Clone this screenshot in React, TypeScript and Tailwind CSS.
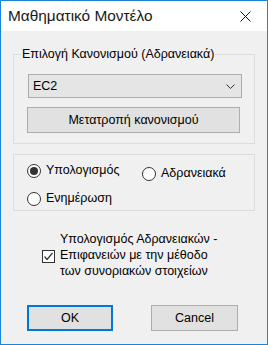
import React from "react";

function Radio({ checked, label }: { checked?: boolean; label: string }) {
  return (
    <div className="flex items-center gap-[5px] h-[15px]">
      <div className="w-[14px] h-[14px] rounded-full border border-[#333333] bg-white flex items-center justify-center shrink-0">
        {checked && <div className="w-[8px] h-[8px] rounded-full bg-[#333333]" />}
      </div>
      <span className="leading-[15px]">{label}</span>
    </div>
  );
}

export default function App() {
  return (
    <div
      className="w-[268px] h-[345px] border border-[#1883d7] bg-[#f0f0f0] flex flex-col text-[12.5px] text-black"
      style={{ fontFamily: '"Liberation Sans", Arial, sans-serif' }}
    >
      <div className="h-[30px] bg-white flex items-center justify-between pl-[7px] pr-[16px]">
        <span className="text-[15.4px] leading-[20px] text-[#1a1a1a]">Μαθηματικό Μοντέλο</span>
        <svg width="11" height="11" viewBox="0 0 11 11" className="mt-[1px]">
          <path d="M0.5 0.5 L10.5 10.5 M10.5 0.5 L0.5 10.5" stroke="#111" strokeWidth="1" />
        </svg>
      </div>

      <div className="flex flex-col px-[12px]">
        <div className="relative mt-[23px] border border-[#dcdcdc] h-[90px] pl-[13px] pt-[19px]">
          <span className="absolute left-[7px] -top-[9px] px-[1px] bg-[#f0f0f0] leading-[16px]">
            Επιλογή Κανονισμού (Αδρανειακά)
          </span>
          <div className="w-[214px] h-[24px] ml-[1px] border border-[#acacac] bg-[#e5e5e5] flex items-center justify-between pl-[4px] pr-[6px]">
            <span>EC2</span>
            <svg width="9" height="5" viewBox="0 0 9 5">
              <path d="M0.5 0.5 L4.5 4.5 L8.5 0.5" stroke="#333" strokeWidth="1" fill="none" />
            </svg>
          </div>
          <div className="mt-[9px] w-[213px] h-[26px] border border-[#adadad] bg-[#e1e1e1] flex items-center justify-center">
            Μετατροπή κανονισμού
          </div>
        </div>

        <div className="mt-[10px] border border-[#dcdcdc] h-[57px] pl-[13px] pt-[8px] flex flex-col gap-[13px]">
          <div className="flex h-[15px] items-start">
            <div className="w-[115px]">
              <Radio checked label="Υπολογισμός" />
            </div>
            <div className="mt-[3px]">
              <Radio label="Αδρανειακά" />
            </div>
          </div>
          <Radio label="Ενημέρωση" />
        </div>

        <div className="mt-[20px] ml-[29px] flex items-center gap-[5px]">
          <div className="w-[13px] h-[13px] border border-[#333333] bg-white flex items-center justify-center mt-[2px]">
            <svg width="11" height="11" viewBox="0 0 11 11">
              <path d="M1.5 5.5 L4 8.5 L9.5 2" stroke="#333" strokeWidth="1.2" fill="none" />
            </svg>
          </div>
          <div className="leading-[16px]">
            <div>Υπολογισμός Αδρανειακών -</div>
            <div>Επιφανειών με την μέθοδο</div>
            <div>των συνοριακών στοιχείων</div>
          </div>
        </div>

        <div className="mt-[26px] ml-[14px] flex gap-[38px]">
          <div className="w-[86px] h-[26px] border-2 border-[#0078d7] bg-[#e1e1e1] flex items-center justify-center">
            OK
          </div>
          <div className="w-[87px] h-[26px] border border-[#adadad] bg-[#e1e1e1] flex items-center justify-center">
            Cancel
          </div>
        </div>
      </div>
    </div>
  );
}
